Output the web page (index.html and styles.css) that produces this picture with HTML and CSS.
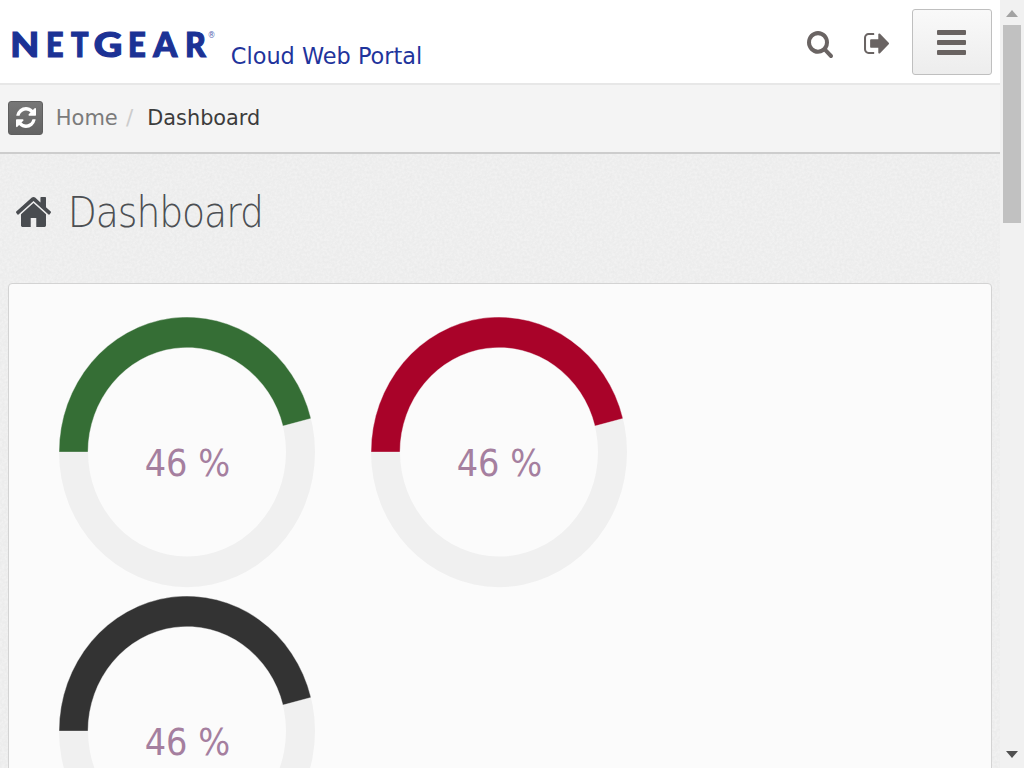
FILE: index.html
```html
<!DOCTYPE html>
<html lang="en">
<head>
<meta charset="utf-8">
<title>Cloud Web Portal</title>
<link rel="stylesheet" href="styles.css">
</head>
<body>
<div class="page">
  <header class="header">
    <svg class="logo" viewBox="0 0 220 83" role="img" aria-label="NETGEAR">
      <text class="logo-text" y="56.8"><tspan x="10.3" textLength="29" lengthAdjust="spacingAndGlyphs">N</tspan><tspan x="45.9" textLength="17.5" lengthAdjust="spacingAndGlyphs">E</tspan><tspan x="71" textLength="17.5" lengthAdjust="spacingAndGlyphs">T</tspan><tspan x="93.8" textLength="28.5" lengthAdjust="spacingAndGlyphs">G</tspan><tspan x="127.9" textLength="17.8" lengthAdjust="spacingAndGlyphs">E</tspan><tspan x="153.3" textLength="24" lengthAdjust="spacingAndGlyphs">A</tspan><tspan x="185" textLength="20.8" lengthAdjust="spacingAndGlyphs">R</tspan></text>
      <text class="logo-mark" x="207.5" y="37.5">®</text>
    </svg>
    <svg class="brand" viewBox="0 0 210 83"><text class="brand-text" x="10.8" y="64" textLength="191.5" lengthAdjust="spacingAndGlyphs">Cloud Web Portal</text></svg>
    <nav class="actions">
      <svg class="icon search" viewBox="64 128 1664 1664" preserveAspectRatio="none"><path d="M1216 832q0-185-131.5-316.5t-316.5-131.5-316.5 131.5-131.5 316.5 131.5 316.5 316.5 131.5 316.5-131.5 131.5-316.5zm512 832q0 52-38 90t-90 38q-54 0-90-38l-343-342q-179 124-399 124-143 0-273.5-55.5t-225-150-150-225-55.5-273.5 55.5-273.5 150-225 225-150 273.5-55.5 273.5 55.5 225 150 150 225 55.5 273.5q0 220-124 399l343 343q37 37 37 90z"/></svg>
      <svg class="icon signout" viewBox="64 256 1568 1280" preserveAspectRatio="none"><path d="M704 1440q0 4 1 20t.5 26.5-3 23.5-10 19.5-20.5 6.5h-320q-119 0-203.5-84.5t-84.5-203.5v-704q0-119 84.5-203.5t203.5-84.5h320q13 0 22.5 9.5t9.5 22.5q0 4 1 20t.5 26.5-3 23.5-10 19.5-20.5 6.5h-320q-66 0-113 47t-47 113v704q0 66 47 113t113 47h312l11.5 1 11.5 3 8 5.5 7 9 2 13.5zm928-544q0 26-19 45l-544 544q-19 19-45 19t-45-19-19-45v-288h-448q-26 0-45-19t-19-45v-384q0-26 19-45t45-19h448v-288q0-26 19-45t45-19 45 19l544 544q19 19 19 45z"/></svg>
      <button class="menu" aria-label="Menu"><span></span><span></span><span></span></button>
    </nav>
  </header>
  <div class="ribbon">
    <button class="refresh" aria-label="Refresh"><svg viewBox="128 128 1536 1536" preserveAspectRatio="none"><path d="M1639 1056q0 5-1 7-64 268-268 434.5t-478 166.5q-146 0-282.5-55t-243.5-157l-129 129q-19 19-45 19t-45-19-19-45v-448q0-26 19-45t45-19h448q26 0 45 19t19 45-19 45l-137 137q71 66 161 102t187 36q134 0 250-65t186-179q11-17 53-117 8-23 30-23h192q13 0 22.5 9.5t9.5 22.5zm25-800v448q0 26-19 45t-45 19h-448q-26 0-45-19t-19-45 19-45l138-138q-148-137-349-137-134 0-250 65t-186 179q-11 17-53 117-8 23-30 23h-199q-13 0-22.5-9.5t-9.5-22.5v-7q65-268 270-434.5t480-166.5q146 0 284 55.5t245 156.5l130-129q19-19 45-19t45 19 19 45z"/></svg></button>
    <svg class="crumbs" viewBox="0 0 230 67">
      <text class="crumb" x="12.8" y="40" textLength="62" lengthAdjust="spacingAndGlyphs">Home</text>
      <text class="crumb slash" x="83" y="40">/</text>
      <text class="crumb current" x="104.3" y="40" textLength="113" lengthAdjust="spacingAndGlyphs">Dashboard</text>
    </svg>
  </div>
  <main class="content">
    <div class="title">
      <svg class="home" viewBox="89 253 1614 1283" preserveAspectRatio="none"><path d="M1472 992v480q0 26-19 45t-45 19h-384v-384h-256v384h-384q-26 0-45-19t-19-45v-480q0-1 .5-3t.5-3l575-474 575 474q1 2 1 6zm223-69l-62 74q-8 9-21 11h-3q-13 0-21-7l-692-577-692 577q-12 8-24 7-13-2-21-11l-62-74q-8-10-7-23.5t11-21.5l719-599q32-26 76-26t76 26l244 204v-195q0-14 9-23t23-9h192q14 0 23 9t9 23v408l219 182q10 8 11 21.5t-7 23.5z"/></svg>
      <svg class="heading" viewBox="0 0 260 60"><text class="heading-text" x="16.8" y="44" textLength="195" lengthAdjust="spacingAndGlyphs">Dashboard</text></svg>
    </div>
    <section class="panel">
      <svg class="gauge" viewBox="-129 -129 258 258" preserveAspectRatio="none">
        <path class="track" d="M-128 0A128 128 0 1 1 128 0A128 128 0 1 1 -128 0ZM-99 0A99 99 0 1 0 99 0A99 99 0 1 0 -99 0Z"/>
        <path class="value green" d="M-128 0A128 128 0 0 1 123.98 -31.83L95.89 -24.62A99 99 0 0 0 -99 0Z"/>
        <text class="percent" x="0.4" y="22.3" textLength="85.5" lengthAdjust="spacingAndGlyphs">46 %</text>
      </svg>
      <svg class="gauge" viewBox="-129 -129 258 258" preserveAspectRatio="none">
        <path class="track" d="M-128 0A128 128 0 1 1 128 0A128 128 0 1 1 -128 0ZM-99 0A99 99 0 1 0 99 0A99 99 0 1 0 -99 0Z"/>
        <path class="value red" d="M-128 0A128 128 0 0 1 123.98 -31.83L95.89 -24.62A99 99 0 0 0 -99 0Z"/>
        <text class="percent" x="0.4" y="22.3" textLength="85.5" lengthAdjust="spacingAndGlyphs">46 %</text>
      </svg>
      <svg class="gauge" viewBox="-129 -129 258 258" preserveAspectRatio="none">
        <path class="track" d="M-128 0A128 128 0 1 1 128 0A128 128 0 1 1 -128 0ZM-99 0A99 99 0 1 0 99 0A99 99 0 1 0 -99 0Z"/>
        <path class="value dark" d="M-128 0A128 128 0 0 1 123.98 -31.83L95.89 -24.62A99 99 0 0 0 -99 0Z"/>
        <text class="percent" x="0.4" y="22.3" textLength="85.5" lengthAdjust="spacingAndGlyphs">46 %</text>
      </svg>
    </section>
  </main>
</div>
<aside class="scrollbar">
  <div class="arrow up"></div>
  <div class="thumb"></div>
  <div class="arrow down"></div>
</aside>
</body>
</html>
```
FILE: styles.css
```css
* { box-sizing: border-box; }
body {
  margin: 0;
  height: 768px;
  display: flex;
  overflow: hidden;
  font-family: "DejaVu Sans", sans-serif;
  background: #eeefef;
}
svg { display: block; flex: none; }
.page { width: 1000px; height: 768px; overflow: hidden; flex: none; }

.header {
  height: 85px;
  display: flex;
  background: #fff;
  border-bottom: 2px solid #e7e7e7;
}
.logo { width: 220px; height: 83px; }
.logo-text { font: 900 34.5px Lato, sans-serif; fill: #1c3295; stroke: #1c3295; stroke-width: 1.2px; }
.logo-mark { font: 8px "DejaVu Sans", sans-serif; fill: #5566b2; }
.brand { width: 210px; height: 83px; }
.brand-text { font-size: 23.3px; fill: #1f349c; }
.actions {
  margin-left: auto;
  padding: 8px 8px 0 0;
  display: flex;
  align-items: flex-start;
}
.icon { fill: #6a6463; }
.search { width: 26px; height: 27px; margin: 23px 31px 0 0; }
.signout { width: 25px; height: 21px; margin: 25px 23px 0 0; }
.menu {
  width: 80px;
  height: 66px;
  margin-top: .5px;
  padding: 2px 1px 0 0;
  display: flex;
  flex-direction: column;
  align-items: center;
  justify-content: center;
  gap: 5px;
  border: 1.5px solid #bfbfbf;
  border-radius: 3px;
  background: linear-gradient(#f9f9f9, #ededed);
}
.menu span { width: 29px; height: 5px; border-radius: 1px; background: #696361; }

.ribbon {
  height: 69px;
  padding-left: 8px;
  display: flex;
  background: #f4f4f4;
  border-bottom: 2px solid #cdcdcd;
}
.refresh {
  width: 35px;
  height: 34px;
  margin: 16px 0 0;
  padding: 0;
  display: flex;
  align-items: center;
  justify-content: center;
  border: 1px solid #5f5f5f;
  border-radius: 3px;
  background: linear-gradient(#777, #636363);
}
.refresh svg { width: 20px; height: 21px; fill: #fff; margin-top: -2px; }
.crumbs { width: 230px; height: 67px; }
.crumb { font-size: 21.5px; fill: #7b7b7b; }
.slash { fill: #ccc; }
.current { fill: #3c3c3c; }

.content {
  height: 614px;
  padding: 29px 8px 0;
  background-color: #f1f1f1;
  background-image: url("data:image/svg+xml,%3Csvg xmlns='http://www.w3.org/2000/svg' width='200' height='200'%3E%3Cfilter id='n' x='0' y='0' width='100%25' height='100%25' color-interpolation-filters='sRGB'%3E%3CfeTurbulence type='fractalNoise' baseFrequency='.4' numOctaves='2' stitchTiles='stitch'/%3E%3CfeColorMatrix values='0 0 0 0 .5 0 0 0 0 .52 0 0 0 0 .52 .12 0 0 0 -.036'/%3E%3C/filter%3E%3Crect width='200' height='200' filter='url(%23n)'/%3E%3C/svg%3E");
}
.title { height: 99.5px; padding-left: 8px; display: flex; }
.home { width: 35px; height: 30px; margin-top: 14px; fill: #494c50; }
.heading { width: 260px; height: 60px; }
.heading-text { font-size: 42px; font-weight: 200; letter-spacing: -1.2px; fill: #4c4f53; }
.panel {
  height: 760px;
  padding: 32.2px 0 0 48.8px;
  display: grid;
  grid-template-columns: 312.5px 312.5px;
  grid-auto-rows: 279.2px;
  align-content: start;
  background: #fbfbfb;
  border: 1.5px solid #d3d3d3;
  border-radius: 4px;
}
.gauge { width: 258px; height: 272.2px; }
.track { fill: #f0f0f0; }
.value { stroke: #fbfbfb; stroke-width: .4px; }
.green { fill: #356e35; }
.red { fill: #a90329; }
.dark { fill: #333; }
.percent { font-size: 35px; fill: #a57f9f; text-anchor: middle; }

.scrollbar {
  width: 24px;
  height: 768px;
  flex: none;
  display: flex;
  flex-direction: column;
  align-items: center;
  background: #f1f1f1;
}
.arrow { border: 6px solid transparent; }
.up { border-top: 0; border-bottom: 7px solid #a3a3a3; margin: 10px 0 8px; }
.thumb { width: 18px; height: 198px; background: #c1c1c1; }
.down { border-bottom: 0; border-top: 7px solid #505050; margin: auto 0 10px; }
```
